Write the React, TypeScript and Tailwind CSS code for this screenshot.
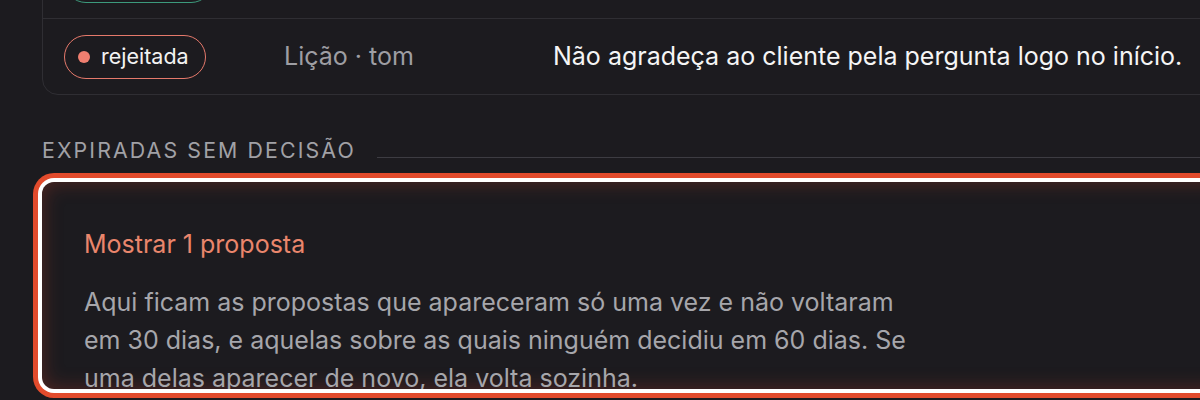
import React from "react";

export default function App() {
  return (
    <div
      className="w-[1200px] h-[400px] overflow-hidden bg-[#1c1b1f] pl-[42px]"
      style={{ fontFamily: "Inter, 'Noto Sans', sans-serif" }}
    >
      {/* proposals card */}
      <div className="mt-[-57px] w-[1220px] rounded-2xl border border-[#2f2e33]">
        <div className="grid h-[75px] grid-cols-[220px_269px_1fr] items-center border-b border-[#2f2e33] px-[21px]">
          <div>
            <span className="inline-flex h-[44px] items-center gap-[11px] rounded-full border-[1.5px] border-[#3c9a7c] pl-[13px] pr-[16px] text-[21.5px] text-[#f2f2f2]">
              <span className="h-[12px] w-[12px] rounded-full bg-[#3fb08c]" />
              aprovada
            </span>
          </div>
          <div className="text-[25px] text-[#9e9ea3]">Lição · tom</div>
          <div className="whitespace-nowrap text-[25px] text-[#f5f5f5]">Seja direto e breve.</div>
        </div>
        <div className="grid h-[75px] grid-cols-[220px_269px_1fr] items-center px-[21px]">
          <div>
            <span className="inline-flex h-[44px] items-center gap-[11px] rounded-full border-[1.5px] border-[#e5796b] pl-[13px] pr-[16px] text-[21.5px] text-[#f2f2f2]">
              <span className="h-[12px] w-[12px] rounded-full bg-[#f07f70]" />
              rejeitada
            </span>
          </div>
          <div className="text-[25px] text-[#9e9ea3]">Lição · tom</div>
          <div className="whitespace-nowrap text-[25px] text-[#f5f5f5]">
            Não agradeça ao cliente pela pergunta logo no início.
          </div>
        </div>
      </div>

      {/* section header */}
      <div className="mt-[40px] flex items-end gap-[21px]">
        <div className="text-[21.3px] leading-[30px] tracking-[0.1em] text-[#a1a1a6]">
          EXPIRADAS SEM DECISÃO
        </div>
        <div className="mb-[7px] h-px flex-1 bg-[#3d3c42]" />
      </div>

      {/* expired card */}
      <div className="mt-[17px] h-[207px] w-[1220px] overflow-hidden rounded-[12px] bg-[#1c1b1f] px-[42px] pt-[46px] shadow-[0_0_0_4px_#ffffff,0_0_0_9px_#e24b2c,inset_0_0_20px_rgba(190,60,40,0.35)]">
        <div className="text-[25px] leading-[32px] text-[#ea866c]">Mostrar 1 proposta</div>
        <p className="mt-[23px] max-w-[845px] text-[25px] leading-[38px] text-[#a6a6ab]">
          Aqui ficam as propostas que apareceram só uma vez e não voltaram em 30 dias, e aquelas
          sobre as quais ninguém decidiu em 60 dias. Se uma delas aparecer de novo, ela volta
          sozinha.
        </p>
      </div>
    </div>
  );
}
